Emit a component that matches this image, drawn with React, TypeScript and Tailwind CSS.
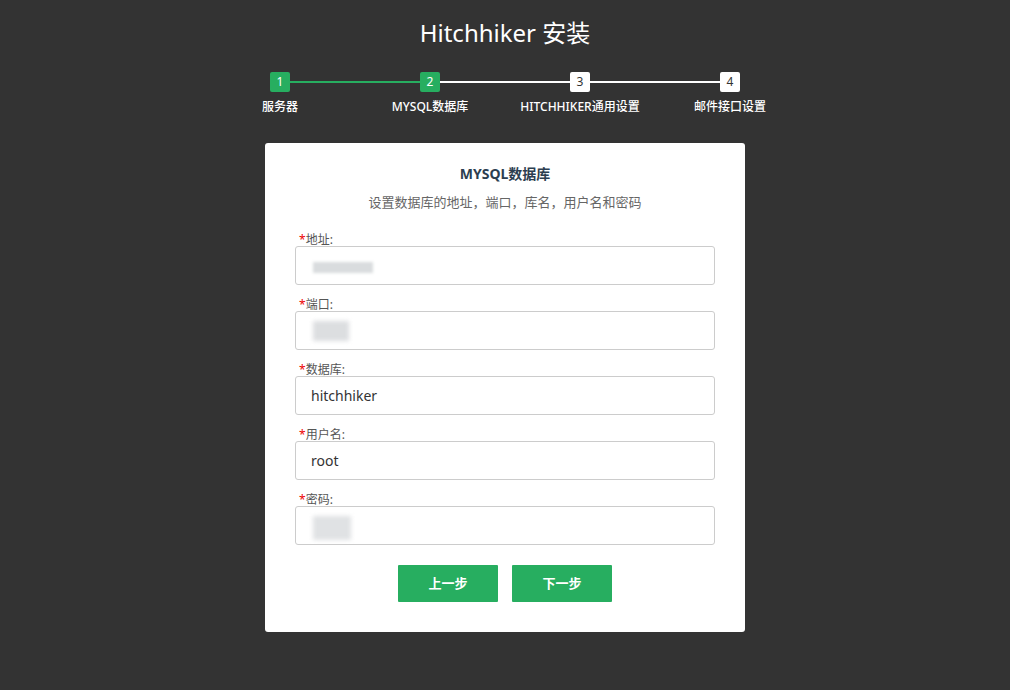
import React from "react";

const font = { fontFamily: '"Noto Sans", "Noto Sans CJK SC", sans-serif' };

function Field({ label, value, blur }: { label: string; value?: string; blur?: "addr" | "port" | "pwd" }) {
  return (
    <div className="flex flex-col">
      <div className="text-[12px] leading-[16px] text-[#555] pl-[4px] pt-[2px] h-[16px]">
        <span className="text-[#e00]">*</span>
        {label}:
      </div>
      <div className="relative h-[39px] w-[420px] rounded-[3px] border border-[#ccc] bg-white flex items-center pl-[15px] text-[14px] text-[#333] overflow-hidden">
        {value}
        {blur === "addr" && (
          <div className="absolute left-[17px] top-[15px] h-[11px] w-[60px] bg-[#d9dcde] blur-[1.5px]" />
        )}
        {blur === "port" && (
          <div className="absolute left-[17px] top-[9px] h-[20px] w-[36px] bg-[#dcdee0] blur-[2px]" />
        )}
        {blur === "pwd" && (
          <div className="absolute left-[17px] top-[9px] h-[24px] w-[38px] bg-[#e0e2e4] blur-[2px]" />
        )}
      </div>
    </div>
  );
}

function Box({ n, active }: { n: number; active?: boolean }) {
  return (
    <div
      className={
        "w-[20px] h-[20px] rounded-[2px] flex items-center justify-center text-[12px] " +
        (active ? "bg-[#27ae60] text-white" : "bg-white text-[#333]")
      }
    >
      {n}
    </div>
  );
}

export default function App() {
  return (
    <div className="min-h-[690px] w-full bg-[#333333] flex flex-col items-center" style={font}>
      <h1 className="mt-[16px] h-[34px] text-[24px] leading-[34px] text-white">Hitchhiker 安装</h1>
      <div className="mt-[22px] flex items-center">
        <Box n={1} active />
        <div className="w-[130px] h-[2px] bg-[#27ae60]" />
        <Box n={2} active />
        <div className="w-[130px] h-[2px] bg-white" />
        <Box n={3} />
        <div className="w-[130px] h-[2px] bg-white" />
        <Box n={4} />
      </div>
      <div className="mt-[6px] grid grid-cols-[150px_150px_150px_150px] text-[12px] leading-[18px] text-white font-medium">
        <div className="text-center">服务器</div>
        <div className="text-center">MYSQL数据库</div>
        <div className="text-center">HITCHHIKER通用设置</div>
        <div className="text-center">邮件接口设置</div>
      </div>
      <div className="mt-[27px] w-[480px] h-[489px] bg-white rounded-[3px] flex flex-col items-center pt-[21px]">
        <div className="text-[14px] leading-[20px] font-bold text-[#2c3e50]">MYSQL数据库</div>
        <div className="mt-[8px] text-[13px] leading-[20px] text-[#666]">设置数据库的地址，端口，库名，用户名和密码</div>
        <div className="mt-[18px] flex flex-col gap-[10px]">
          <Field label="地址" blur="addr" />
          <Field label="端口" blur="port" />
          <Field label="数据库" value="hitchhiker" />
          <Field label="用户名" value="root" />
          <Field label="密码" blur="pwd" />
        </div>
        <div className="mt-[20px] flex gap-[14px]">
          <button className="w-[100px] h-[37px] bg-[#27ae60] text-white text-[13px] font-bold rounded-[1px]">上一步</button>
          <button className="w-[100px] h-[37px] bg-[#27ae60] text-white text-[13px] font-bold rounded-[1px]">下一步</button>
        </div>
      </div>
    </div>
  );
}
